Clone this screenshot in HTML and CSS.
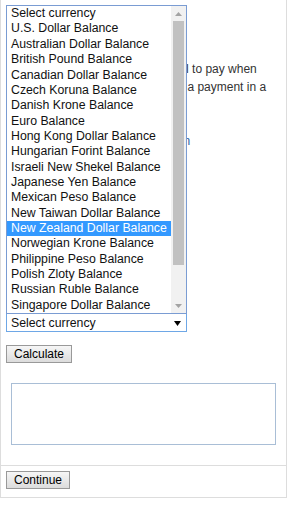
FILE: index.html
```html
<!DOCTYPE html>
<html lang="en">
<head>
    <meta charset="UTF-8">
    <meta name="viewport" content="width=device-width, initial-scale=1.0">
    <title>Currency Converter</title>
    <link rel="stylesheet" href="styles.css">
</head>
<body>
<div class="panel">
    <div class="panel-body">
        <p class="intro">Use this form to work out the total to pay when you need to wire money or make a payment in a foreign currency.</p>
        <p class="more"><a href="#">Learn about Currency Conversion</a></p>

        <input type="text" class="text-input" aria-label="Amount">
        <input type="text" class="text-input" aria-label="Reference">

        <div class="picker">
            <div class="select">
                <span>Select currency</span>
                <svg class="arrow" width="7" height="7" viewBox="0 0 7 7"><path d="M0 1h7L3.5 6z" fill="#000"/></svg>
            </div>
            <!-- open dropdown list -->
            <div class="options">
                <ul class="option-list">
                    <li>Select currency</li>
                    <li>U.S. Dollar Balance</li>
                    <li>Australian Dollar Balance</li>
                    <li>British Pound Balance</li>
                    <li>Canadian Dollar Balance</li>
                    <li>Czech Koruna Balance</li>
                    <li>Danish Krone Balance</li>
                    <li>Euro Balance</li>
                    <li>Hong Kong Dollar Balance</li>
                    <li>Hungarian Forint Balance</li>
                    <li>Israeli New Shekel Balance</li>
                    <li>Japanese Yen Balance</li>
                    <li>Mexican Peso Balance</li>
                    <li>New Taiwan Dollar Balance</li>
                    <li class="active">New Zealand Dollar Balance</li>
                    <li>Norwegian Krone Balance</li>
                    <li>Philippine Peso Balance</li>
                    <li>Polish Zloty Balance</li>
                    <li>Russian Ruble Balance</li>
                    <li>Singapore Dollar Balance</li>
                </ul>
                <div class="scrollbar">
                    <div class="scroll-btn"><svg width="7" height="4" viewBox="0 0 7 4"><path d="M0 4L3.5 0 7 4z" fill="#a3a3a3"/></svg></div>
                    <div class="scroll-track"><div class="scroll-thumb"></div></div>
                    <div class="scroll-btn"><svg width="7" height="4" viewBox="0 0 7 4"><path d="M0 0h7L3.5 4z" fill="#a3a3a3"/></svg></div>
                </div>
            </div>
        </div>

        <button type="button" class="btn calc">Calculate</button>
        <div class="result"></div>
    </div>
    <div class="panel-foot">
        <button type="button" class="btn">Continue</button>
    </div>
</div>
</body>
</html>
```

FILE: styles.css
```css
body { margin: 0; background: #fff; font-family: "Liberation Sans", Arial, sans-serif; font-size: 12px; color: #333; }

.panel { width: 287px; box-sizing: border-box; border: 1px solid #ddd; border-top: none; }
.panel-body { padding: 60px 5px 0; display: flex; flex-direction: column; align-items: flex-start; }
.intro { margin: 0 4px 18px; line-height: 18px; }
.more { margin: 0 4px 39px; line-height: 18px; }
.more a { color: #2d5da1; text-decoration: none; }

.text-input { width: 170px; height: 22px; box-sizing: border-box; border: 1px solid #aaa; margin: 0 0 40px; }

/* closed select + the popup list opened above it */
.picker { position: relative; width: 181px; }
.select {
    height: 19px; box-sizing: border-box; border: 1px solid #6ea7e6; padding: 0 5px 0 4px;
    display: flex; align-items: center; justify-content: space-between;
    font-size: 12.3px; color: #111; background: #fff;
}
.select .arrow { margin-top: 1px; }

.options {
    position: absolute; left: 0; bottom: calc(100% - 1px); width: 181px; box-sizing: border-box;
    border: 1px solid #7a9cd3; background: #fff; display: flex;
}
.option-list { list-style: none; margin: 0; padding: 0; flex: 1; }
.option-list li { height: 15.35px; line-height: 15.35px; padding-left: 4px; font-size: 12.3px; color: #111; white-space: nowrap; }
.option-list li.active { background: #3399ff; color: #fff; }

.scrollbar { width: 15px; background: #f1f1f1; display: flex; flex-direction: column; }
.scroll-btn { height: 15px; display: flex; align-items: center; justify-content: center; }
.scroll-track { flex: 1; padding: 0 2px; }
.scroll-thumb { height: 244px; background: #c1c1c1; }

.btn {
    height: 18px; padding: 0 7px; margin: 0; box-sizing: border-box;
    border: 1px solid #999; background: linear-gradient(#f6f6f6, #dcdcdc);
    font-family: inherit; font-size: 12px; line-height: 16px; color: #000;
}
.calc { margin-top: 13px; }
.result { width: 265px; height: 62px; box-sizing: border-box; margin: 20px 5px; border: 1px solid #a9bed6; }

.panel-foot { border-top: 1px solid #ddd; padding: 5px 5px 8px; }
```
